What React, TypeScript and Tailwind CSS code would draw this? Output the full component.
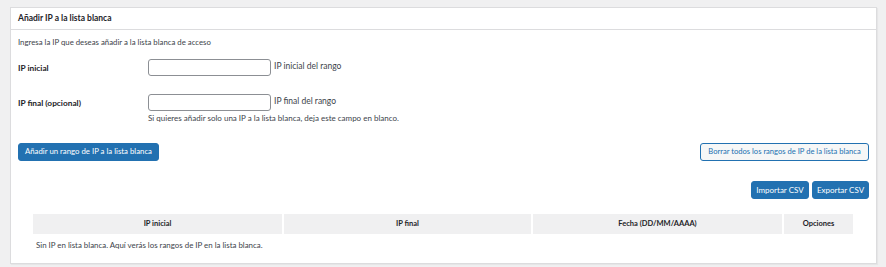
import React from 'react'

const font = { fontFamily: 'Lato, "Open Sans", Arial, sans-serif' }

function Field({ label, hint, help }: { label: string; hint: string; help?: string }) {
  return (
    <div className="flex">
      <div className="w-[130px] shrink-0 pt-[3px] text-[8.3px] font-bold text-[#1d2327]">{label}</div>
      <div>
        <div className="flex items-center">
          <input
            type="text"
            className="w-[123px] h-[17px] rounded-[3px] border border-[#8c8f94] bg-white outline-none"
          />
          <span className="ml-[3px] -mt-[2px] text-[8.5px] text-[#3c434a]">{hint}</span>
        </div>
        {help && <p className="mt-[1px] text-[8px] text-[#3c434a] leading-[13px]">{help}</p>}
      </div>
    </div>
  )
}

export default function App() {
  const cols = [
    { name: 'IP inicial', w: 'w-[249px]' },
    { name: 'IP final', w: 'w-[247px]' },
    { name: 'Fecha (DD/MM/AAAA)', w: 'w-[249px]' },
    { name: 'Opciones', w: 'w-[69px]' },
  ]

  return (
    <div style={font} className="w-[886px] h-[267px] bg-[#f0f0f1] pt-[7px] pl-[10px] pr-[9px] overflow-hidden">
      <div className="h-[257px] bg-white border border-[#dcdcde] shadow-[1px_1px_1px_rgba(0,0,0,0.04)]">
        <div className="h-[22px] border-b border-[#dcdcde] px-[7px] flex items-center">
          <h2 className="text-[8.5px] font-bold text-[#1d2327]">Añadir IP a la lista blanca</h2>
        </div>

        <div className="px-[7px]">
          <p className="pt-[6px] text-[7.8px] leading-[13px] text-[#3c434a]">
            Ingresa la IP que deseas añadir a la lista blanca de acceso
          </p>

          <div className="mt-[10px]">
            <Field label="IP inicial" hint="IP inicial del rango" />
          </div>
          <div className="mt-[18px]">
            <Field
              label="IP final (opcional)"
              hint="IP final del rango"
              help="Si quieres añadir solo una IP a la lista blanca, deja este campo en blanco."
            />
          </div>

          <div className="mt-[18px] flex justify-between">
            <button className="h-[18px] px-[6px] rounded-[3px] bg-[#2271b1] border border-[#2271b1] text-white text-[7.8px] leading-none">
              Añadir un rango de IP a la lista blanca
            </button>
            <button className="h-[18px] w-[169px] rounded-[3px] bg-[#f6f7f7] border border-[#2271b1] text-[#2271b1] text-[7.6px] leading-none">
              Borrar todos los rangos de IP de la lista blanca
            </button>
          </div>

          <div className="mt-[20px] flex justify-end gap-[3px]">
            <button className="h-[18px] w-[58px] rounded-[3px] bg-[#2271b1] border border-[#2271b1] text-white text-[8px] leading-none">
              Importar CSV
            </button>
            <button className="h-[18px] w-[57px] rounded-[3px] bg-[#2271b1] border border-[#2271b1] text-white text-[8px] leading-none">
              Exportar CSV
            </button>
          </div>

          <div className="mt-[15px] ml-[15px]">
            <div className="flex gap-[2px]">
              {cols.map((c) => (
                <div
                  key={c.name}
                  className={`${c.w} h-[20px] bg-[#f0f0f1] flex items-center justify-center text-[7.5px] font-bold text-[#1d2327]`}
                >
                  {c.name}
                </div>
              ))}
            </div>
            <p className="mt-[5px] pl-[3px] text-[7.9px] leading-[13px] text-[#3c434a]">
              Sin IP en lista blanca. Aquí verás los rangos de IP en la lista blanca.
            </p>
          </div>
        </div>
      </div>
    </div>
  )
}
